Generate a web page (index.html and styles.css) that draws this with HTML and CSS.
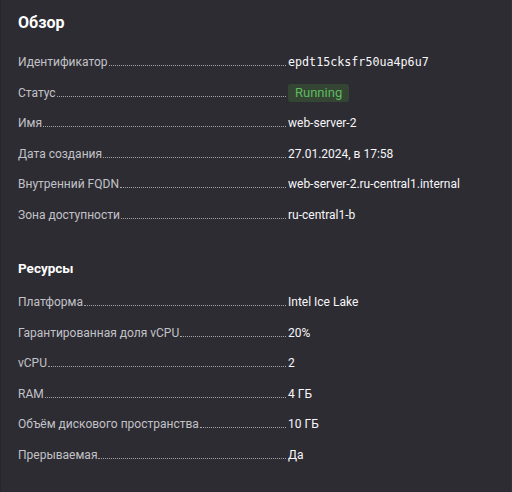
FILE: index.html
```html
<!DOCTYPE html>
<html lang="ru">
<head>
<meta charset="utf-8">
<link rel="stylesheet" href="styles.css">
</head>
<body>
<div class="page">
  <section class="overview">
    <h2 class="title">Обзор</h2>
    <div class="rows">
      <div class="row"><div class="key"><span class="label">Идентификатор</span><span class="leader"></span></div><div class="value mono">epdt15cksfr50ua4p6u7</div></div>
      <div class="row"><div class="key"><span class="label">Статус</span><span class="leader"></span></div><div class="value"><span class="badge">Running</span></div></div>
      <div class="row"><div class="key"><span class="label">Имя</span><span class="leader"></span></div><div class="value">web-server-2</div></div>
      <div class="row"><div class="key"><span class="label">Дата создания</span><span class="leader"></span></div><div class="value">27.01.2024, в 17:58</div></div>
      <div class="row"><div class="key"><span class="label">Внутренний FQDN</span><span class="leader"></span></div><div class="value">web-server-2.ru-central1.internal</div></div>
      <div class="row"><div class="key"><span class="label">Зона доступности</span><span class="leader"></span></div><div class="value">ru-central1-b</div></div>
    </div>
  </section>
  <section class="resources">
    <h2 class="title small">Ресурсы</h2>
    <div class="rows">
      <div class="row"><div class="key"><span class="label">Платформа</span><span class="leader"></span></div><div class="value">Intel Ice Lake</div></div>
      <div class="row"><div class="key"><span class="label">Гарантированная доля vCPU</span><span class="leader"></span></div><div class="value">20%</div></div>
      <div class="row"><div class="key"><span class="label">vCPU</span><span class="leader"></span></div><div class="value">2</div></div>
      <div class="row"><div class="key"><span class="label">RAM</span><span class="leader"></span></div><div class="value">4 ГБ</div></div>
      <div class="row"><div class="key"><span class="label">Объём дискового пространства</span><span class="leader"></span></div><div class="value">10 ГБ</div></div>
      <div class="row"><div class="key"><span class="label">Прерываемая</span><span class="leader"></span></div><div class="value">Да</div></div>
    </div>
  </section>
</div>
</body>
</html>
```

FILE: styles.css
```css
html, body {
  margin: 0;
  padding: 0;
  background: #2d2c33;
}
body {
  font-family: Roboto, "Liberation Sans", Arial, sans-serif;
  color: #f0f0f2;
  width: 512px;
  height: 492px;
  overflow: hidden;
}
.page {
  padding: 14px 0 0 17px;
  box-sizing: border-box;
  height: 492px;
  border-left: 1px solid #28272d;
  border-right: 1px solid #34333a;
}
.title {
  margin: 0;
  font-size: 16px;
  line-height: 18px;
  font-weight: bold;
  color: #ffffff;
}
.title.small {
  font-size: 13.5px;
  line-height: 20px;
}
.overview .rows {
  margin-top: 22px;
}
.resources {
  margin-top: 35px;
}
.resources .rows {
  margin-top: 16px;
}
.rows {
  display: flex;
  flex-direction: column;
  gap: 14.6px;
}
.row {
  display: flex;
  height: 16px;
  align-items: center;
  font-size: 12px;
  line-height: 16px;
}
.key {
  width: 270px;
  display: flex;
  align-items: baseline;
}
.label {
  color: #c2c2c7;
  white-space: nowrap;
}
.leader {
  flex: 1;
  margin: 0 2px 0 1px;
  border-bottom: 1px dotted #a4a4aa;
  height: 0;
}
.value {
  color: #f7f7f9;
  white-space: nowrap;
}
.mono {
  font-family: "DejaVu Sans Mono", "Liberation Mono", monospace;
  font-size: 11.7px;
}
.badge {
  display: inline-block;
  height: 18px;
  line-height: 18px;
  padding: 0 7px;
  border-radius: 3px;
  background: #344534;
  color: #5dbb5d;
  font-size: 13px;
}
```
